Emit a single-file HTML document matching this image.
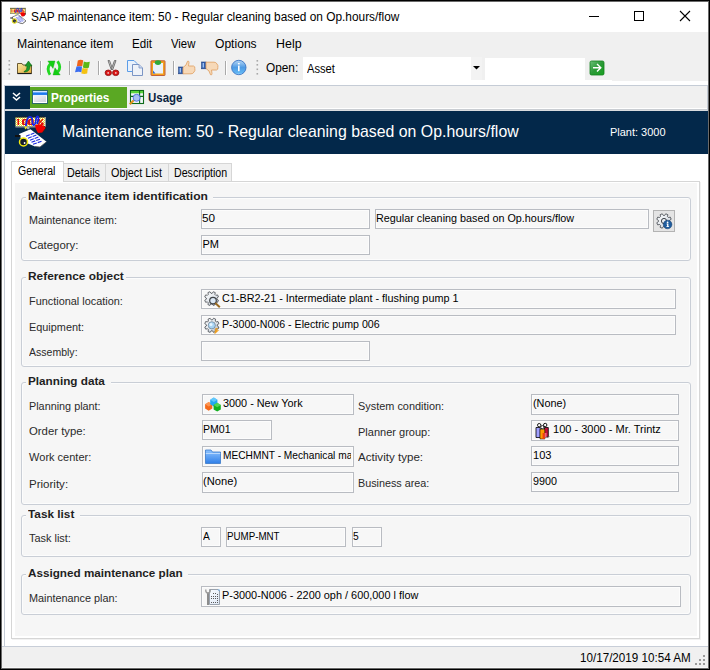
<!DOCTYPE html>
<html><head><meta charset="utf-8"><style>
html,body{margin:0;padding:0;width:710px;height:670px;overflow:hidden;background:#fff;}
body{position:relative;font-family:"Liberation Sans", sans-serif;}
.tx{position:absolute;white-space:nowrap;transform-origin:0 0;font-family:"Liberation Sans", sans-serif;}
.tc{position:absolute;overflow:hidden;}
svg{position:absolute;overflow:visible;}
</style></head><body>
<div style="position:absolute;left:0px;top:0px;width:710px;height:670px;background:#000;"></div><div style="position:absolute;left:1px;top:1px;width:708px;height:668px;background:#6a6a6a;"></div><div style="position:absolute;left:2px;top:2px;width:706px;height:666px;background:#ffffff;"></div><div style="position:absolute;left:2px;top:32px;width:706px;height:48px;background:#f0f0f0;"></div><div style="position:absolute;left:612px;top:80px;width:96px;height:1px;background:#f0f0f0;"></div><div style="position:absolute;left:303px;top:57px;width:168px;height:23px;background:#fff;"></div><div style="position:absolute;left:471px;top:57px;width:11px;height:23px;background:#f3f3f3;"></div><div style="position:absolute;left:485px;top:58px;width:100px;height:22px;background:#fff;"></div><div style="position:absolute;left:4px;top:85px;width:704px;height:1px;background:#c5ccd6;"></div><div style="position:absolute;left:4px;top:85px;width:1px;height:562px;background:#c5ccd6;"></div><div style="position:absolute;left:707px;top:85px;width:1px;height:26px;background:#c5ccd6;"></div><div style="position:absolute;left:5px;top:86px;width:702px;height:22px;background:#f0f0f0;"></div><div style="position:absolute;left:5px;top:109px;width:702px;height:1px;background:#c9cdd2;"></div><div style="position:absolute;left:5px;top:110px;width:702px;height:1px;background:#d9dbde;"></div><div style="position:absolute;left:5px;top:86px;width:25px;height:23px;background:#03284a;"></div><div style="position:absolute;left:30px;top:87px;width:97px;height:21px;background:#5aa823;"></div><div style="position:absolute;left:5px;top:111px;width:703px;height:43px;background:#03284a;"></div><div style="position:absolute;left:12px;top:182px;width:689px;height:458px;background:#f2f2f2;"></div><div style="position:absolute;left:11px;top:181px;width:689px;height:458px;box-sizing:border-box;border:1px solid #d6d6d6;background:#fff;"></div><div style="position:absolute;left:15px;top:183px;width:682px;height:453px;background:#f6f6f6;"></div><div style="position:absolute;left:63px;top:163px;width:43px;height:19px;box-sizing:border-box;border:1px solid #d6d6d6;background:#f0f0f0;"></div><div style="position:absolute;left:105px;top:163px;width:64px;height:19px;box-sizing:border-box;border:1px solid #d6d6d6;background:#f0f0f0;"></div><div style="position:absolute;left:168px;top:163px;width:64px;height:19px;box-sizing:border-box;border:1px solid #d6d6d6;background:#f0f0f0;"></div><div style="position:absolute;left:11px;top:161px;width:53px;height:21px;box-sizing:border-box;border:1px solid #d6d6d6;border-bottom:none;background:#fff;"></div><div style="position:absolute;left:2px;top:646px;width:706px;height:1px;background:#c8ced8;"></div><div style="position:absolute;left:2px;top:647px;width:706px;height:20px;background:#f0f0f0;"></div><div style="position:absolute;left:2px;top:667px;width:706px;height:1px;background:#f8f8f8;"></div><div style="position:absolute;left:21px;top:197px;width:670px;height:64px;box-sizing:border-box;border:1px solid #c9ced6;border-radius:3px;box-shadow:inset 1px 1px 0 #fcfcfc, inset -1px -1px 0 #fcfcfc;"></div><div style="position:absolute;left:21px;top:277px;width:670px;height:90px;box-sizing:border-box;border:1px solid #c9ced6;border-radius:3px;box-shadow:inset 1px 1px 0 #fcfcfc, inset -1px -1px 0 #fcfcfc;"></div><div style="position:absolute;left:21px;top:382px;width:670px;height:123px;box-sizing:border-box;border:1px solid #c9ced6;border-radius:3px;box-shadow:inset 1px 1px 0 #fcfcfc, inset -1px -1px 0 #fcfcfc;"></div><div style="position:absolute;left:21px;top:515px;width:670px;height:42px;box-sizing:border-box;border:1px solid #c9ced6;border-radius:3px;box-shadow:inset 1px 1px 0 #fcfcfc, inset -1px -1px 0 #fcfcfc;"></div><div style="position:absolute;left:21px;top:574px;width:670px;height:41px;box-sizing:border-box;border:1px solid #c9ced6;border-radius:3px;box-shadow:inset 1px 1px 0 #fcfcfc, inset -1px -1px 0 #fcfcfc;"></div><div style="position:absolute;left:26px;top:196px;width:187px;height:3px;background:#f6f6f6;"></div><div style="position:absolute;left:26px;top:276px;width:100px;height:3px;background:#f6f6f6;"></div><div style="position:absolute;left:26px;top:381px;width:85px;height:3px;background:#f6f6f6;"></div><div style="position:absolute;left:26px;top:514px;width:54px;height:3px;background:#f6f6f6;"></div><div style="position:absolute;left:26px;top:573px;width:162px;height:3px;background:#f6f6f6;"></div><div style="position:absolute;left:201px;top:209px;width:169px;height:20px;box-sizing:border-box;border:1px solid #b9bcc2;background:#f7f7f7;box-shadow:inset 1px 1px 0 #fcfcfc, inset -1px -1px 0 #fcfcfc;"></div><div style="position:absolute;left:375px;top:209px;width:274px;height:20px;box-sizing:border-box;border:1px solid #b9bcc2;background:#f7f7f7;box-shadow:inset 1px 1px 0 #fcfcfc, inset -1px -1px 0 #fcfcfc;"></div><div style="position:absolute;left:201px;top:235px;width:169px;height:20px;box-sizing:border-box;border:1px solid #b9bcc2;background:#f7f7f7;box-shadow:inset 1px 1px 0 #fcfcfc, inset -1px -1px 0 #fcfcfc;"></div><div style="position:absolute;left:201px;top:289px;width:475px;height:20px;box-sizing:border-box;border:1px solid #b9bcc2;background:#f7f7f7;box-shadow:inset 1px 1px 0 #fcfcfc, inset -1px -1px 0 #fcfcfc;"></div><div style="position:absolute;left:201px;top:315px;width:475px;height:20px;box-sizing:border-box;border:1px solid #b9bcc2;background:#f7f7f7;box-shadow:inset 1px 1px 0 #fcfcfc, inset -1px -1px 0 #fcfcfc;"></div><div style="position:absolute;left:201px;top:341px;width:169px;height:20px;box-sizing:border-box;border:1px solid #b9bcc2;background:#f7f7f7;box-shadow:inset 1px 1px 0 #fcfcfc, inset -1px -1px 0 #fcfcfc;"></div><div style="position:absolute;left:202px;top:394px;width:152px;height:21px;box-sizing:border-box;border:1px solid #b9bcc2;background:#f7f7f7;box-shadow:inset 1px 1px 0 #fcfcfc, inset -1px -1px 0 #fcfcfc;"></div><div style="position:absolute;left:202px;top:420px;width:70px;height:20px;box-sizing:border-box;border:1px solid #b9bcc2;background:#f7f7f7;box-shadow:inset 1px 1px 0 #fcfcfc, inset -1px -1px 0 #fcfcfc;"></div><div style="position:absolute;left:202px;top:446px;width:152px;height:21px;box-sizing:border-box;border:1px solid #b9bcc2;background:#f7f7f7;box-shadow:inset 1px 1px 0 #fcfcfc, inset -1px -1px 0 #fcfcfc;"></div><div style="position:absolute;left:202px;top:472px;width:152px;height:21px;box-sizing:border-box;border:1px solid #b9bcc2;background:#f7f7f7;box-shadow:inset 1px 1px 0 #fcfcfc, inset -1px -1px 0 #fcfcfc;"></div><div style="position:absolute;left:531px;top:394px;width:148px;height:21px;box-sizing:border-box;border:1px solid #b9bcc2;background:#f7f7f7;box-shadow:inset 1px 1px 0 #fcfcfc, inset -1px -1px 0 #fcfcfc;"></div><div style="position:absolute;left:531px;top:420px;width:148px;height:21px;box-sizing:border-box;border:1px solid #b9bcc2;background:#f7f7f7;box-shadow:inset 1px 1px 0 #fcfcfc, inset -1px -1px 0 #fcfcfc;"></div><div style="position:absolute;left:531px;top:446px;width:148px;height:20px;box-sizing:border-box;border:1px solid #b9bcc2;background:#f7f7f7;box-shadow:inset 1px 1px 0 #fcfcfc, inset -1px -1px 0 #fcfcfc;"></div><div style="position:absolute;left:531px;top:472px;width:148px;height:20px;box-sizing:border-box;border:1px solid #b9bcc2;background:#f7f7f7;box-shadow:inset 1px 1px 0 #fcfcfc, inset -1px -1px 0 #fcfcfc;"></div><div style="position:absolute;left:201px;top:527px;width:20px;height:20px;box-sizing:border-box;border:1px solid #b9bcc2;background:#f7f7f7;box-shadow:inset 1px 1px 0 #fcfcfc, inset -1px -1px 0 #fcfcfc;"></div><div style="position:absolute;left:226px;top:527px;width:120px;height:20px;box-sizing:border-box;border:1px solid #b9bcc2;background:#f7f7f7;box-shadow:inset 1px 1px 0 #fcfcfc, inset -1px -1px 0 #fcfcfc;"></div><div style="position:absolute;left:352px;top:527px;width:30px;height:20px;box-sizing:border-box;border:1px solid #b9bcc2;background:#f7f7f7;box-shadow:inset 1px 1px 0 #fcfcfc, inset -1px -1px 0 #fcfcfc;"></div><div style="position:absolute;left:201px;top:586px;width:480px;height:21px;box-sizing:border-box;border:1px solid #b9bcc2;background:#f7f7f7;box-shadow:inset 1px 1px 0 #fcfcfc, inset -1px -1px 0 #fcfcfc;"></div><div style="position:absolute;left:653px;top:210px;width:22px;height:22px;box-sizing:border-box;border:1px solid #b3b3b3;background:#e4e4e4;"></div>
<!-- title bar app icon -->
<svg style="left:10px;top:8px" width="16" height="16" viewBox="0 0 31 32">
  <rect x="0.5" y="0.5" width="30" height="10.5" fill="none" stroke="#6a6a20" stroke-width="1.6"/>
  <use href="#appicon"/>
  <path d="M4 18 L15.5 13.2 L31.5 25.8 L25 31 L20 30.5 L7 25 Z" fill="none" stroke="#555" stroke-width="1.4"/>
  <circle cx="8.5" cy="26" r="4.6" fill="none" stroke="#d8d010" stroke-width="1.6"/>
</svg>
<svg style="left:0;top:0" width="0" height="0">
 <defs>
  <pattern id="chk" width="2" height="2" patternUnits="userSpaceOnUse"><rect width="2" height="2" fill="#f6ea20"/><rect width="1" height="1" fill="#ffffff"/><rect x="1" y="1" width="1" height="1" fill="#ffffff"/></pattern>
  <g id="appicon">
   <rect x="0.5" y="1" width="29.5" height="9.5" fill="url(#chk)"/>
   <rect x="0.5" y="0.6" width="29.5" height="1" fill="#222"/>
   <rect x="0.5" y="10.3" width="30" height="1.2" fill="#9a9a9a"/>
   <rect x="29.8" y="1" width="1.2" height="10.5" fill="#9a9a9a"/>
   <g fill="#e01010">
    <rect x="2.5" y="3" width="1.6" height="6"/><rect x="1.8" y="3" width="1.2" height="1.2"/>
    <path d="M8.6 3 h2.6 a1.6 1.6 0 0 1 1.6 1.6 v2.8 a1.6 1.6 0 0 1 -1.6 1.6 h-2.6 a1.6 1.6 0 0 1 -1.6 -1.6 v-2.8 a1.6 1.6 0 0 1 1.6 -1.6 Z M9.2 4.3 v3.4 h1.4 v-3.4 Z" fill-rule="evenodd"/>
    <path d="M14.6 3 h2.6 a1.6 1.6 0 0 1 1.6 1.6 v2.8 a1.6 1.6 0 0 1 -1.6 1.6 h-2.6 a1.6 1.6 0 0 1 -1.6 -1.6 v-2.8 a1.6 1.6 0 0 1 1.6 -1.6 Z M15.2 4.3 v3.4 h1.4 v-3.4 Z" fill-rule="evenodd"/>
    <path d="M23 8.5 L28 3 M23 3.5 h1.5 v1.5 h-1.5 Z M26.5 7 h1.5 v1.5 h-1.5 Z" stroke="#e01010" stroke-width="1.2"/>
   </g>
   <path d="M11 10 C11.5 2 14 -0.5 16.5 1.5 C18.5 3.5 16 9 19 9 C21.5 9 20 0.5 22.5 0.5 C24.5 0.5 23 6 22 8" fill="none" stroke="#1426e8" stroke-width="1.8"/>
   <path d="M20 9 L25 8.3 L29.5 10 L31 12 L27.5 16.5 L23 17 L20.8 13 Z" fill="#f00000"/>
   <path d="M29.5 10 L31 12 L27.5 16.5" fill="none" stroke="#222" stroke-width="0.9"/>
   <path d="M9.5 10.2 L13.5 11 L10 13.5 Z" fill="#e8e020"/>
   <circle cx="13.2" cy="12" r="1.4" fill="#b0b0b0"/>
   <path d="M4 18 L15.5 13.2 L31.5 25.8 L25 31 L20 30.5 L7 25 Z" fill="#ffffff"/>
   <path d="M31.5 25.8 L25 31 L20 30.5" fill="none" stroke="#555" stroke-width="0.8"/>
   <path d="M11 20.2 L19.5 17 M13 22.2 L21.5 19 M15 24.2 L23.5 21 M16.5 26.2 L25.5 23 M18 28.2 L27.5 25" stroke="#1a2ae0" stroke-width="1.1" stroke-dasharray="4 1"/>
   <rect x="0" y="19" width="5.5" height="2" fill="#111"/>
   <circle cx="8.5" cy="26" r="4" fill="#141c2c" stroke="#f2ea10" stroke-width="1.5"/>
   <circle cx="9.6" cy="27" r="0.9" fill="#fff"/>
  </g>
 </defs>
</svg>
<!-- window buttons -->
<div style="position:absolute;left:589px;top:16px;width:10px;height:1px;background:#000"></div>
<div style="position:absolute;left:634px;top:11px;width:10px;height:10px;box-sizing:border-box;border:1px solid #000"></div>
<svg style="left:679px;top:10px" width="12" height="12" viewBox="0 0 12 12"><path d="M1 1 L11 11 M11 1 L1 11" stroke="#000" stroke-width="1.1"/></svg>
<!-- toolbar grips -->
<svg style="left:8px;top:59px" width="3" height="17" viewBox="0 0 3 17"><g fill="#a8a8a8"><rect x="0.5" y="1" width="1.6" height="1.6"/><rect x="0.5" y="5" width="1.6" height="1.6"/><rect x="0.5" y="9.5" width="1.6" height="1.6"/><rect x="0.5" y="14" width="1.6" height="1.6"/></g></svg>
<svg style="left:256px;top:59px" width="3" height="17" viewBox="0 0 3 17"><g fill="#a8a8a8"><rect x="0.5" y="1" width="1.6" height="1.6"/><rect x="0.5" y="5" width="1.6" height="1.6"/><rect x="0.5" y="9.5" width="1.6" height="1.6"/><rect x="0.5" y="14" width="1.6" height="1.6"/></g></svg>
<!-- separators -->
<div style="position:absolute;left:40px;top:61px;width:1px;height:14px;background:#a9a9a9;box-shadow:1px 0 0 #fff"></div>
<div style="position:absolute;left:69px;top:61px;width:1px;height:14px;background:#a9a9a9;box-shadow:1px 0 0 #fff"></div>
<div style="position:absolute;left:98px;top:61px;width:1px;height:14px;background:#a9a9a9;box-shadow:1px 0 0 #fff"></div>
<div style="position:absolute;left:173px;top:61px;width:1px;height:14px;background:#a9a9a9;box-shadow:1px 0 0 #fff"></div>
<div style="position:absolute;left:225px;top:61px;width:1px;height:14px;background:#a9a9a9;box-shadow:1px 0 0 #fff"></div>
<!-- folder w/ arrow -->
<svg style="left:16px;top:59px" width="17" height="16" viewBox="0 0 17 16">
 <defs><linearGradient id="fold" x1="0" y1="0" x2="1" y2="1"><stop offset="0" stop-color="#fbe9a6"/><stop offset="1" stop-color="#e0a83a"/></linearGradient></defs>
 <path d="M1.5 4.5 L6 4.5 L7 6 L15.5 6 L15.5 14.5 L1.5 14.5 Z" fill="url(#fold)" stroke="#6b5a33" stroke-width="1"/>
 <path d="M15.5 14.5 L1.5 14.5" stroke="#1a1a1a" stroke-width="1.2"/>
 <path d="M8 12.5 C10 12 11 10 11 7 L9 7 L12.5 2 L16 7 L14 7 C14 11 12 13 8 13 Z" fill="#1e9a2a" stroke="#0d6a18" stroke-width="0.6"/>
</svg>
<!-- refresh -->
<svg style="left:44px;top:58px" width="20" height="20" viewBox="0 0 20 20">
 <path d="M6 16.8 Q2.2 10.5 6.2 6" fill="none" stroke="#22d822" stroke-width="2.8"/>
 <path d="M3.8 3 L11 3 L9 10.4 Z" fill="#12d012" stroke="#20a020" stroke-width="0.4"/>
 <path d="M13.6 3.2 Q17.8 9.5 13.8 14" fill="none" stroke="#22d822" stroke-width="2.8"/>
 <path d="M9 16.9 L16.2 16.9 L11 9.8 Z" fill="#12d012" stroke="#20a020" stroke-width="0.4"/>
</svg>
<!-- windows flag -->
<svg style="left:72px;top:57px" width="22" height="20" viewBox="0 0 22 20">
 <path d="M5.8 3.4 Q8.3 2.4 11.2 3.2 L10.3 9.3 Q7.5 8.6 4.8 9.4 Z" fill="#f0641a"/>
 <path d="M11.8 4.6 Q14.5 5.8 17.8 4.8 L16.8 10.8 Q13.5 11.6 10.9 10.6 Z" fill="#5cb818"/>
 <path d="M4.5 9.6 Q7.3 8.8 10 9.6 L9.5 15.2 Q6.5 14.5 3 15.3 Z" fill="#3c6ef0"/>
 <path d="M10.5 11.1 Q13 12 15.8 11 L15.2 16.6 Q12.5 17.3 9.3 16.6 Z" fill="#f4c212"/>
</svg>
<!-- scissors -->
<svg style="left:104px;top:60px" width="16" height="16" viewBox="0 0 16 16">
 <path d="M4 0.5 L5.5 0.5 L8.8 9.5 L7.2 9.5 Z" fill="#d8d8d8" stroke="#6a6a6a" stroke-width="0.9"/>
 <path d="M10.5 0.5 L12 0.5 L8.8 9.5 L7.2 9.5 Z" fill="#c8c8c8" stroke="#6a6a6a" stroke-width="0.9"/>
 <ellipse cx="4.3" cy="12.8" rx="3.2" ry="2.8" fill="#dc1414" stroke="#8a1010" stroke-width="0.8"/>
 <ellipse cx="11.7" cy="12.8" rx="3.2" ry="2.8" fill="#dc1414" stroke="#8a1010" stroke-width="0.8"/>
 <circle cx="4.2" cy="12.9" r="0.9" fill="#f0c0c0"/>
 <circle cx="11.8" cy="12.9" r="0.9" fill="#f0c0c0"/>
</svg>
<!-- copy -->
<svg style="left:127px;top:60px" width="16" height="16" viewBox="0 0 16 16">
 <path d="M0.5 0.5 L7 0.5 L10 3.5 L10 11.5 L0.5 11.5 Z" fill="#e8f1fc" stroke="#5b9de8" stroke-width="1"/>
 <path d="M5.5 4.5 L12 4.5 L15.5 8 L15.5 15.5 L5.5 15.5 Z" fill="#eef2f8" stroke="#7b95c4" stroke-width="1"/>
 <path d="M12 4.5 L12 8 L15.5 8" fill="#c9d6ee" stroke="#7b95c4" stroke-width="0.8"/>
</svg>
<!-- paste -->
<svg style="left:150px;top:60px" width="16" height="16" viewBox="0 0 16 16">
 <rect x="1" y="0.8" width="14" height="14.7" rx="0.5" fill="#f5a01c" stroke="#c0603a" stroke-width="1"/>
 <rect x="3" y="3" width="10" height="10.5" fill="#e9f1fb"/>
 <path d="M3 10.5 L5.5 13.5 L3 13.5 Z" fill="#2a6ad8"/>
 <ellipse cx="8" cy="2.6" rx="3.2" ry="2.3" fill="#2ea83a"/>
</svg>
<!-- thumbs up -->
<svg style="left:178px;top:60px" width="18" height="15" viewBox="0 0 18 15">
 <rect x="0.6" y="7" width="4.4" height="6.8" fill="#2f5fb0" stroke="#1f3f80" stroke-width="0.6"/>
 <rect x="1.6" y="8" width="1.4" height="4.5" fill="#9fc0f0"/>
 <path d="M5 7.5 L8 5 L9.5 1.3 Q11 0.6 11 2.5 L10.5 6 L15.5 6 Q17.3 6.5 16.8 8.5 Q17.5 10.5 16 12 Q15 14 13 13.8 L5 13.8 Z" fill="#f7d9b8" stroke="#e1a56a" stroke-width="0.9"/>
</svg>
<!-- thumbs down -->
<svg style="left:201px;top:61px" width="18" height="15" viewBox="0 0 18 15">
 <rect x="0.6" y="1" width="4.4" height="6.8" fill="#2f5fb0" stroke="#1f3f80" stroke-width="0.6"/>
 <rect x="1.6" y="2" width="1.4" height="4.5" fill="#9fc0f0"/>
 <path d="M5 7.5 L8 10 L9.5 13.7 Q11 14.4 11 12.5 L10.5 9 L15.5 9 Q17.3 8.5 16.8 6.5 Q17.5 4.5 16 3 Q15 1 13 1.2 L5 1.2 Z" fill="#f7d9b8" stroke="#e1a56a" stroke-width="0.9"/>
</svg>
<!-- info -->
<svg style="left:231px;top:60px" width="16" height="16" viewBox="0 0 16 16">
 <defs><linearGradient id="infog" x1="0" y1="0" x2="0" y2="1"><stop offset="0" stop-color="#b5d6f5"/><stop offset="0.5" stop-color="#4f9be4"/><stop offset="0.85" stop-color="#5fb4f2"/><stop offset="1" stop-color="#9ad8ff"/></linearGradient></defs>
 <circle cx="7.8" cy="7.5" r="7.2" fill="url(#infog)" stroke="#3a74c4" stroke-width="0.9"/>
 <rect x="6.9" y="3" width="1.8" height="1.4" fill="#fff"/>
 <rect x="7" y="5.6" width="1.6" height="5.6" fill="#fff"/>
</svg>
<!-- combo arrow -->
<svg style="left:473px;top:66px" width="7" height="4" viewBox="0 0 7 4"><path d="M0 0 L7 0 L3.5 3.5 Z" fill="#000"/></svg>
<!-- green go button -->
<svg style="left:590px;top:61px" width="14" height="14" viewBox="0 0 14 14">
 <defs><linearGradient id="gog" x1="0" y1="0" x2="1" y2="1"><stop offset="0" stop-color="#6cc07a"/><stop offset="0.5" stop-color="#2a9a36"/><stop offset="1" stop-color="#18a020"/></linearGradient></defs>
 <rect x="0" y="0" width="14" height="14" rx="1.5" fill="url(#gog)" stroke="#13801c" stroke-width="0.8"/>
 <path d="M3 6.8 L10.5 6.8 M7 3 L10.8 6.8 L7 10.6" fill="none" stroke="#fff" stroke-width="1.4"/>
</svg>
<!-- nav chevrons -->
<svg style="left:12px;top:92px" width="9" height="10" viewBox="0 0 9 10"><path d="M1 1 L4.5 4 L8 1 M1 5 L4.5 8 L8 5" fill="none" stroke="#fff" stroke-width="1.6"/></svg>
<!-- window icon -->
<svg style="left:32px;top:90px" width="16" height="14" viewBox="0 0 16 14">
 <defs><linearGradient id="wing" x1="0" y1="0" x2="1" y2="1"><stop offset="0" stop-color="#f4f4f8"/><stop offset="1" stop-color="#cfd2e0"/></linearGradient>
 <linearGradient id="wtb" x1="0" y1="0" x2="0" y2="1"><stop offset="0" stop-color="#ffffff"/><stop offset="0.25" stop-color="#9cc8ff"/><stop offset="0.45" stop-color="#1a78f0"/><stop offset="0.8" stop-color="#2a80f0"/><stop offset="1" stop-color="#cfe4ff"/></linearGradient></defs>
 <rect x="0.5" y="0.5" width="15" height="13" fill="#ffffff" stroke="#2c6b6a" stroke-width="1"/>
 <rect x="1" y="1" width="14" height="4.5" fill="url(#wtb)"/>
 <rect x="2" y="6" width="12" height="6" fill="url(#wing)"/>
</svg>
<!-- usage icon -->
<svg style="left:129px;top:89px" width="16" height="16" viewBox="0 0 16 16">
 <rect x="1.5" y="1.5" width="13" height="13" fill="#f3f7fc" stroke="#0f6b1a" stroke-width="1.1"/>
 <rect x="2" y="2" width="12" height="2.3" fill="#5ad43a"/>
 <path d="M1.5 7.4 L14.5 7.4 M10.6 1.5 L10.6 14.5" stroke="#0f6b1a" stroke-width="1.1"/>
 <path d="M0.8 15.2 L4.8 11.2" stroke="#e0901a" stroke-width="2"/>
 <circle cx="7.6" cy="8.8" r="3.5" fill="#a8c0f2" stroke="#4a6ce0" stroke-width="0.9"/>
</svg>
<!-- header big icon -->
<svg style="left:15px;top:116px" width="31" height="32" viewBox="0 0 31 32">
  <use href="#appicon"/>
</svg>
<!-- gear info button -->
<svg style="left:656px;top:213px" width="16" height="16" viewBox="0 0 16 16">
 <defs><linearGradient id="gearg" x1="0" y1="0" x2="1" y2="1"><stop offset="0" stop-color="#ffffff"/><stop offset="0.6" stop-color="#dfe4ea"/><stop offset="1" stop-color="#9aa3ad"/></linearGradient></defs>
 <path id="gearp" d="M13.56 8.63 L15.20 9.73 L14.31 11.87 L12.38 11.49 L11.49 12.38 L11.87 14.31 L9.73 15.20 L8.63 13.56 L7.37 13.56 L6.27 15.20 L4.13 14.31 L4.51 12.38 L3.62 11.49 L1.69 11.87 L0.80 9.73 L2.44 8.63 L2.44 7.37 L0.80 6.27 L1.69 4.13 L3.62 4.51 L4.51 3.62 L4.13 1.69 L6.27 0.80 L7.37 2.44 L8.63 2.44 L9.73 0.80 L11.87 1.69 L11.49 3.62 L12.38 4.51 L14.31 4.13 L15.20 6.27 L13.56 7.37 Z" fill="url(#gearg)" stroke="#3f444a" stroke-width="0.8"/>
 <circle cx="8" cy="8" r="2.6" fill="#e8ecf0" stroke="#3f444a" stroke-width="1"/>
 <circle cx="11.6" cy="11.5" r="4.3" fill="#1f5d9e" stroke="#153f70" stroke-width="0.5"/>
 <circle cx="11.6" cy="9.3" r="0.9" fill="#fff"/>
 <path d="M10.6 10.6 L12.4 10.6 L12.4 13.2 L13.1 13.2 L13.1 14 L10.4 14 L10.4 13.2 L11.1 13.2 L11.1 11.4 L10.6 11.4 Z" fill="#fff"/>
</svg>
<!-- gear magnifier (functional location) -->
<svg style="left:204px;top:291px" width="17" height="17" viewBox="0 0 17 17">
 <g transform="scale(0.95)"><use href="#gearp"/></g>
 <circle cx="9" cy="9.6" r="3.3" fill="#dbe8f5" stroke="#404448" stroke-width="1.2"/>
 <path d="M11.3 12 L15.8 16.2" stroke="#9a6a20" stroke-width="2"/>
</svg>
<!-- gear equipment -->
<svg style="left:204px;top:317px" width="16" height="17" viewBox="0 0 16 17">
 <g transform="translate(0,0.5) scale(0.98)" ><use href="#gearp"/></g>
 <circle cx="7.8" cy="8.3" r="3.6" fill="#a8d4f4" stroke="#5a6a78" stroke-width="0.6"/>
 <circle cx="7" cy="7.5" r="1.5" fill="#e8f6ff"/>
 <path d="M11 12 L13 11.8 L11.5 14 L13.5 13.8 L10.5 16.5" fill="none" stroke="#f0a020" stroke-width="1.2"/>
</svg>
<!-- cubes -->
<svg style="left:205px;top:397px" width="17" height="16" viewBox="0 0 17 16"><path d="M3.70 5.00 L7.30 7.20 L7.30 11.60 L3.70 13.80 L0.10 11.60 L0.10 7.20 Z" fill="#f46a1c"/><path d="M3.70 5.00 L7.30 7.20 L3.70 9.40 L0.10 7.20 Z" fill="#ffa060" opacity="0.8"/><path d="M8.80 0.60 L12.40 2.80 L12.40 7.20 L8.80 9.40 L5.20 7.20 L5.20 2.80 Z" fill="#22a8f0"/><path d="M8.80 0.60 L12.40 2.80 L8.80 5.00 L5.20 2.80 Z" fill="#70d0ff" opacity="0.8"/><path d="M12.20 5.80 L15.80 8.00 L15.80 12.40 L12.20 14.60 L8.60 12.40 L8.60 8.00 Z" fill="#12b020"/><path d="M12.20 5.80 L15.80 8.00 L12.20 10.20 L8.60 8.00 Z" fill="#60e060" opacity="0.8"/></svg>
<!-- folder blue -->
<svg style="left:205px;top:449px" width="16" height="15" viewBox="0 0 16 15">
 <defs><linearGradient id="bfold" x1="0" y1="0" x2="0" y2="1"><stop offset="0" stop-color="#8fc4ff"/><stop offset="1" stop-color="#2f7fe8"/></linearGradient></defs>
 <path d="M0.5 1 L6 1 L7.5 3 L15.5 3 L15.5 14.5 L0.5 14.5 Z" fill="url(#bfold)" stroke="#3a78c8" stroke-width="0.8"/>
 <rect x="0.8" y="4" width="14.4" height="0.8" fill="#c8e2ff"/>
</svg>
<!-- planner group people -->
<svg style="left:535px;top:422px" width="15" height="18" viewBox="0 0 15 18">
 <circle cx="4.2" cy="3.2" r="1.7" fill="#fff" stroke="#000" stroke-width="0.9"/>
 <circle cx="10.2" cy="3" r="1.7" fill="#fff" stroke="#000" stroke-width="0.9"/>
 <path d="M1 5.5 L5.2 5.5 L5.2 15.5 L1 15.5 Z" fill="#a0a0ff" stroke="#000" stroke-width="0.8"/>
 <path d="M9.5 5.5 L13.3 5.5 L13.3 15 L9.5 15 Z" fill="#c0103a" stroke="#000" stroke-width="0.8"/>
 <circle cx="7.3" cy="5.2" r="1.6" fill="#fff" stroke="#000" stroke-width="0.8"/>
 <path d="M5 7.2 L9.8 7.2 L9.8 17 L5 17 Z" fill="#ff9a00" stroke="#000" stroke-width="0.5"/>
 <rect x="7.6" y="11" width="2.2" height="6" fill="#f04010"/>
 <rect x="9.8" y="11" width="1.8" height="4.2" fill="#f06080"/>
 <path d="M12 15.5 L14.5 14.5" stroke="#777" stroke-width="0.8"/>
</svg>
<!-- plan doc -->
<svg style="left:205px;top:589px" width="16" height="17" viewBox="0 0 16 17">
 <defs><linearGradient id="pdg" x1="0" y1="0" x2="1" y2="1"><stop offset="0" stop-color="#f8fbff"/><stop offset="1" stop-color="#dfe8f5"/></linearGradient></defs>
 <path d="M4.5 0.5 L13 0.5 L14.5 2 L14.5 15.5 L4.5 15.5 Z" fill="url(#pdg)" stroke="#9aa2ad" stroke-width="1"/>
 <path d="M12.8 0.5 L14.5 0.5 L14.5 2.5 Z" fill="#4a9ae0"/>
 <g fill="#5a5a5a"><rect x="8" y="4" width="1" height="1"/><rect x="10" y="4" width="1" height="1"/><rect x="12" y="5" width="1" height="1"/><rect x="6" y="7" width="1" height="1"/><rect x="8" y="7" width="1" height="1"/><rect x="10" y="7" width="1" height="1"/><rect x="12" y="7" width="1" height="1"/><rect x="6" y="9" width="1" height="1"/><rect x="8" y="9" width="1" height="1"/><rect x="10" y="9" width="1" height="1"/><rect x="12" y="9" width="1" height="1"/><rect x="12" y="11" width="1" height="1"/><rect x="6" y="13" width="1" height="1"/><rect x="8" y="13" width="1" height="1"/><rect x="10" y="13" width="1" height="1"/><rect x="12" y="13" width="1" height="1"/></g>
 <path d="M3 3.5 L3 16" stroke="#8c8c8c" stroke-width="2"/>
 <path d="M0.8 0.5 Q0.5 4 3 4 Q5.5 4 5.2 0.5" fill="none" stroke="#9a9a9a" stroke-width="1.4"/>
</svg>
<!-- status grip -->
<svg style="left:696px;top:654px" width="10" height="10" viewBox="0 0 10 10"><g fill="#9a9a9a"><rect x="7" y="1" width="2" height="2"/><rect x="3" y="5" width="2" height="2"/><rect x="7" y="5" width="2" height="2"/><rect x="-1" y="9" width="2" height="2"/><rect x="3" y="9" width="2" height="2"/><rect x="7" y="9" width="2" height="2"/></g></svg>

<span id="t0" class="tx" style="left:30.50px;top:10.01px;font-size:12px;line-height:15px;font-weight:400;color:#000;transform:scaleX(0.9886);">SAP maintenance item: 50 - Regular cleaning based on Op.hours/flow</span><span id="t1" class="tx" style="left:17.20px;top:37.01px;font-size:12px;line-height:15px;font-weight:400;color:#000;transform:scaleX(1.0167);">Maintenance item</span><span id="t2" class="tx" style="left:132.00px;top:37.01px;font-size:12px;line-height:15px;font-weight:400;color:#000;transform:scaleX(0.9651);">Edit</span><span id="t3" class="tx" style="left:170.80px;top:37.01px;font-size:12px;line-height:15px;font-weight:400;color:#000;transform:scaleX(0.9443);">View</span><span id="t4" class="tx" style="left:214.80px;top:37.01px;font-size:12px;line-height:15px;font-weight:400;color:#000;transform:scaleX(1.0073);">Options</span><span id="t5" class="tx" style="left:276.10px;top:37.01px;font-size:12px;line-height:15px;font-weight:400;color:#000;transform:scaleX(1.0353);">Help</span><span id="t6" class="tx" style="left:266.20px;top:61.01px;font-size:12px;line-height:15px;font-weight:400;color:#000;transform:scaleX(0.9855);">Open:</span><span id="t7" class="tx" style="left:307.10px;top:62.01px;font-size:12px;line-height:15px;font-weight:400;color:#000;transform:scaleX(0.9300);">Asset</span><span id="t8" class="tx" style="left:50.90px;top:91.01px;font-size:12px;line-height:15px;font-weight:700;color:#ffffff;transform:scaleX(0.9845);">Properties</span><span id="t9" class="tx" style="left:147.70px;top:91.01px;font-size:12px;line-height:15px;font-weight:700;color:#0b2441;transform:scaleX(0.9558);">Usage</span><span id="t10" class="tx" style="left:62.30px;top:121.00px;font-size:17px;line-height:21px;font-weight:400;color:#ffffff;transform:scaleX(0.9329);">Maintenance item: 50 - Regular cleaning based on Op.hours/flow</span><span id="t11" class="tx" style="left:609.80px;top:125.00px;font-size:11px;line-height:14px;font-weight:400;color:#ffffff;transform:scaleX(0.9972);">Plant: 3000</span><span id="t12" class="tx" style="left:18.10px;top:164.00px;font-size:12px;line-height:15px;font-weight:400;color:#000;transform:scaleX(0.8762);">General</span><span id="t13" class="tx" style="left:67.10px;top:166.01px;font-size:12px;line-height:15px;font-weight:400;color:#000;transform:scaleX(0.8972);">Details</span><span id="t14" class="tx" style="left:111.20px;top:166.01px;font-size:12px;line-height:15px;font-weight:400;color:#000;transform:scaleX(0.8993);">Object List</span><span id="t15" class="tx" style="left:174.10px;top:166.01px;font-size:12px;line-height:15px;font-weight:400;color:#000;transform:scaleX(0.8864);">Description</span><span id="t16" class="tx" style="left:28.00px;top:189.01px;font-size:11px;line-height:14px;font-weight:700;color:#1f1f1f;transform:scaleX(1.0988);">Maintenance item identification</span><span id="t17" class="tx" style="left:28.00px;top:269.00px;font-size:11px;line-height:14px;font-weight:700;color:#1f1f1f;transform:scaleX(1.0795);">Reference object</span><span id="t18" class="tx" style="left:28.00px;top:374.02px;font-size:11px;line-height:14px;font-weight:700;color:#1f1f1f;transform:scaleX(1.0662);">Planning data</span><span id="t19" class="tx" style="left:27.70px;top:507.00px;font-size:11px;line-height:14px;font-weight:700;color:#1f1f1f;transform:scaleX(1.0722);">Task list</span><span id="t20" class="tx" style="left:28.00px;top:566.00px;font-size:11px;line-height:14px;font-weight:700;color:#1f1f1f;transform:scaleX(1.0631);">Assigned maintenance plan</span><span id="t21" class="tx" style="left:29.40px;top:213.01px;font-size:11px;line-height:14px;font-weight:400;color:#2a2a2a;transform:scaleX(0.9788);">Maintenance item:</span><span id="t22" class="tx" style="left:29.40px;top:238.01px;font-size:11px;line-height:14px;font-weight:400;color:#2a2a2a;transform:scaleX(1.0370);">Category:</span><span id="t23" class="tx" style="left:29.10px;top:294.00px;font-size:11px;line-height:14px;font-weight:400;color:#2a2a2a;transform:scaleX(0.9903);">Functional location:</span><span id="t24" class="tx" style="left:29.10px;top:320.00px;font-size:11px;line-height:14px;font-weight:400;color:#2a2a2a;transform:scaleX(0.9889);">Equipment:</span><span id="t25" class="tx" style="left:29.10px;top:345.00px;font-size:11px;line-height:14px;font-weight:400;color:#2a2a2a;transform:scaleX(0.9570);">Assembly:</span><span id="t26" class="tx" style="left:29.10px;top:399.01px;font-size:11px;line-height:14px;font-weight:400;color:#2a2a2a;transform:scaleX(0.9838);">Planning plant:</span><span id="t27" class="tx" style="left:29.10px;top:424.00px;font-size:11px;line-height:14px;font-weight:400;color:#2a2a2a;transform:scaleX(1.0315);">Order type:</span><span id="t28" class="tx" style="left:29.10px;top:450.00px;font-size:11px;line-height:14px;font-weight:400;color:#2a2a2a;">Work center:</span><span id="t29" class="tx" style="left:29.10px;top:477.01px;font-size:11px;line-height:14px;font-weight:400;color:#2a2a2a;transform:scaleX(1.0487);">Priority:</span><span id="t30" class="tx" style="left:357.90px;top:399.01px;font-size:11px;line-height:14px;font-weight:400;color:#2a2a2a;transform:scaleX(0.9912);">System condition:</span><span id="t31" class="tx" style="left:357.90px;top:425.00px;font-size:11px;line-height:14px;font-weight:400;color:#2a2a2a;transform:scaleX(1.0021);">Planner group:</span><span id="t32" class="tx" style="left:357.90px;top:450.01px;font-size:11px;line-height:14px;font-weight:400;color:#2a2a2a;transform:scaleX(1.0541);">Activity type:</span><span id="t33" class="tx" style="left:357.90px;top:476.00px;font-size:11px;line-height:14px;font-weight:400;color:#2a2a2a;transform:scaleX(0.9803);">Business area:</span><span id="t34" class="tx" style="left:29.00px;top:531.01px;font-size:11px;line-height:14px;font-weight:400;color:#2a2a2a;transform:scaleX(0.9927);">Task list:</span><span id="t35" class="tx" style="left:29.10px;top:591.00px;font-size:11px;line-height:14px;font-weight:400;color:#2a2a2a;transform:scaleX(0.9852);">Maintenance plan:</span><span id="t36" class="tx" style="left:202.20px;top:211.00px;font-size:11px;line-height:14px;font-weight:400;color:#000;transform:scaleX(1.0700);">50</span><span id="t37" class="tx" style="left:376.30px;top:211.00px;font-size:11px;line-height:14px;font-weight:400;color:#000;transform:scaleX(0.9816);">Regular cleaning based on Op.hours/flow</span><span id="t38" class="tx" style="left:202.50px;top:237.00px;font-size:11px;line-height:14px;font-weight:400;color:#000;">PM</span><span id="t39" class="tx" style="left:222.10px;top:291.00px;font-size:11px;line-height:14px;font-weight:400;color:#000;transform:scaleX(0.9841);">C1-BR2-21 - Intermediate plant - flushing pump 1</span><span id="t40" class="tx" style="left:222.10px;top:317.00px;font-size:11px;line-height:14px;font-weight:400;color:#000;transform:scaleX(0.9654);">P-3000-N006 - Electric pump 006</span><span id="t41" class="tx" style="left:223.20px;top:396.00px;font-size:11px;line-height:14px;font-weight:400;color:#000;transform:scaleX(0.9863);">3000 - New York</span><span id="t42" class="tx" style="left:202.90px;top:422.01px;font-size:11px;line-height:14px;font-weight:400;color:#000;transform:scaleX(0.9614);">PM01</span><span id="t43" class="tx" style="left:203.40px;top:474.01px;font-size:11px;line-height:14px;font-weight:400;color:#000;transform:scaleX(1.0141);">(None)</span><span id="t44" class="tx" style="left:532.50px;top:396.00px;font-size:11px;line-height:14px;font-weight:400;color:#000;transform:scaleX(0.9853);">(None)</span><span id="t45" class="tx" style="left:553.20px;top:422.01px;font-size:11px;line-height:14px;font-weight:400;color:#000;transform:scaleX(1.0024);">100 - 3000 - Mr. Trintz</span><span id="t46" class="tx" style="left:532.50px;top:448.00px;font-size:11px;line-height:14px;font-weight:400;color:#000;transform:scaleX(1.0090);">103</span><span id="t47" class="tx" style="left:532.50px;top:474.01px;font-size:11px;line-height:14px;font-weight:400;color:#000;transform:scaleX(0.9772);">9900</span><span id="t48" class="tx" style="left:202.50px;top:529.01px;font-size:11px;line-height:14px;font-weight:400;color:#000;transform:scaleX(0.9300);">A</span><span id="t49" class="tx" style="left:226.90px;top:529.01px;font-size:11px;line-height:14px;font-weight:400;color:#000;transform:scaleX(0.8862);">PUMP-MNT</span><span id="t50" class="tx" style="left:352.50px;top:529.01px;font-size:11px;line-height:14px;font-weight:400;color:#000;transform:scaleX(0.9300);">5</span><span id="t51" class="tx" style="left:221.60px;top:588.00px;font-size:11px;line-height:14px;font-weight:400;color:#000;transform:scaleX(0.9909);">P-3000-N006 - 2200 oph / 600,000 l flow</span><div class="tc" style="left:222.80px;top:448.01px;width:128.7px;height:14px;"><span id="t52" class="tx" style="position:absolute;left:0;top:0;font-size:11px;line-height:14px;color:#000;transform:scaleX(0.9250);">MECHMNT - Mechanical maintenance</span></div><span id="t53" class="tx" style="left:579.80px;top:651.01px;font-size:12px;line-height:15px;font-weight:400;color:#000;transform:scaleX(0.9701);">10/17/2019 10:54 AM</span>
</body></html>
